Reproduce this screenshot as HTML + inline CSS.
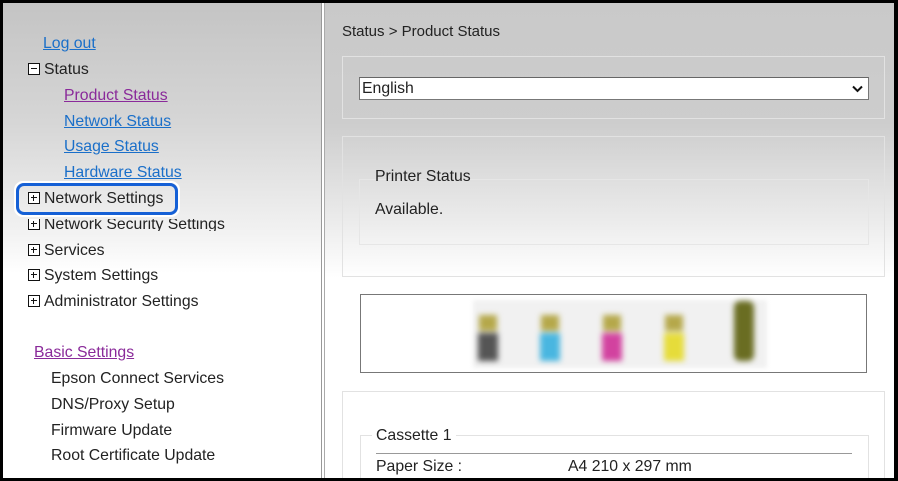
<!DOCTYPE html>
<html><head><meta charset="utf-8"><style>
*{margin:0;padding:0;box-sizing:border-box}
html,body{width:898px;height:481px;overflow:hidden;background:#000;font-family:"Liberation Sans",Arial,sans-serif;font-size:15.8px;color:#222}
#frame{position:absolute;left:3px;top:3px;width:891px;height:475px;background:#fff;overflow:hidden}
#left{position:absolute;left:0;top:0;width:318px;height:475px;background:linear-gradient(#c4c4c4 0,#d6d6d6 120px,#f2f2f2 230px,#fff 270px)}
#div{position:absolute;left:318px;top:0;width:4px;height:475px;border-left:1px solid #999;border-right:1px solid #aaa;background:#fff}
#right{position:absolute;left:322px;top:0;width:569px;height:475px;background:linear-gradient(#c9c9c9 0,#cdcdcd 120px,#ececec 220px,#fff 275px)}
.t{position:absolute;white-space:nowrap;line-height:18px}
a{color:#1a6fc9;text-decoration:underline}
a.v{color:#8a2a9a}
.bx{display:inline-block;width:12px;height:12px;border:1.5px solid #111;position:relative;vertical-align:-1px;margin-right:4px;background:#fff}
.bx:before{content:"";position:absolute;left:1.5px;top:3.75px;width:6px;height:1.5px;background:#111}
.bx.p:after{content:"";position:absolute;left:3.75px;top:1.5px;width:1.5px;height:6px;background:#111}
.box{position:absolute;border:1px solid #e2e2e2}
</style></head><body><div id="frame">
<div id="left">
<div class="t" style="left:40px;top:32px"><a>Log out</a></div>
<div class="t" style="left:25px;top:58px"><span class="bx"></span>Status</div>
<div class="t" style="left:61px;top:84px"><a class="v">Product Status</a></div>
<div class="t" style="left:61px;top:110px"><a>Network Status</a></div>
<div class="t" style="left:61px;top:135px"><a>Usage Status</a></div>
<div class="t" style="left:61px;top:161px"><a>Hardware Status</a></div>
<div style="position:absolute;left:25px;top:216px;width:260px;height:12px;overflow:hidden"><div class="t" style="left:0;top:-3px"><span class="bx p"></span>Network Security Settings</div></div>
<div style="position:absolute;left:11px;top:178px;width:166px;height:36px;border:2px solid #fff;border-radius:9px"></div>
<div style="position:absolute;left:13px;top:180px;width:162px;height:32px;border:3px solid #1560d6;border-radius:8px"></div>
<div class="t" style="left:25px;top:187px"><span class="bx p"></span>Network Settings</div>
<div class="t" style="left:25px;top:239px"><span class="bx p"></span>Services</div>
<div class="t" style="left:25px;top:264px"><span class="bx p"></span>System Settings</div>
<div class="t" style="left:25px;top:290px"><span class="bx p"></span>Administrator Settings</div>
<div class="t" style="left:31px;top:341px"><a class="v">Basic Settings</a></div>
<div class="t" style="left:48px;top:367px">Epson Connect Services</div>
<div class="t" style="left:48px;top:393px">DNS/Proxy Setup</div>
<div class="t" style="left:48px;top:419px">Firmware Update</div>
<div class="t" style="left:48px;top:444px">Root Certificate Update</div>
</div>
<div id="div"></div>
<div id="right">
<div class="t" style="left:17px;top:20px;font-size:15px">Status &gt; Product Status</div>
<div class="box" style="left:17px;top:53px;width:543px;height:63px"></div>
<div style="position:absolute;left:34px;top:74px;width:510px;height:23px;background:#fff;border:1px solid #777;border-top-color:#666"><span class="t" style="left:2px;top:2px">English</span>
<svg style="position:absolute;right:5px;top:7px" width="11" height="8" viewBox="0 0 11 8"><path d="M1 1.5L5.5 6L10 1.5" stroke="#111" stroke-width="2" fill="none"/></svg></div>
<div class="box" style="left:17px;top:133px;width:543px;height:141px"></div>
<div class="box" style="left:34px;top:176px;width:510px;height:66px;border-color:#e6e6e6"></div>
<div class="t" style="left:45px;top:165px;padding:0 4px 0 5px">Printer Status</div>
<div class="t" style="left:50px;top:198px">Available.</div>
<div style="position:absolute;left:35px;top:291px;width:507px;height:79px;border:1px solid #777;background:#fff"></div>
<div style="position:absolute;left:148px;top:297px;width:294px;height:68px;background:#f1f1f1;filter:blur(2px)"></div>
<div style="position:absolute;left:148px;top:304px;width:294px;height:62px;filter:blur(3px)">
<div style="position:absolute;left:6px;top:8px;width:18px;height:16px;background:#b5a84a"></div><div style="position:absolute;left:5px;top:26px;width:20px;height:28px;background:#555"></div>
<div style="position:absolute;left:68px;top:8px;width:18px;height:16px;background:#b5a84a"></div><div style="position:absolute;left:67px;top:26px;width:20px;height:28px;background:#49b6e0"></div>
<div style="position:absolute;left:130px;top:8px;width:18px;height:16px;background:#b5a84a"></div><div style="position:absolute;left:129px;top:26px;width:20px;height:28px;background:#d2429f"></div>
<div style="position:absolute;left:192px;top:8px;width:18px;height:16px;background:#b5a84a"></div><div style="position:absolute;left:191px;top:26px;width:20px;height:28px;background:#e6dc3a"></div>
<div style="position:absolute;left:261px;top:-6px;width:20px;height:60px;background:#6a6d22;border-radius:6px"></div>
</div>
<div class="box" style="left:17px;top:388px;width:543px;height:100px"></div>
<div class="box" style="left:35px;top:432px;width:509px;height:60px"></div>
<div style="position:absolute;left:51px;top:450px;width:476px;height:1px;background:#999"></div>
<div class="t" style="left:47px;top:424px;padding:0 4px;background:#fff">Cassette 1</div>
<div class="t" style="left:51px;top:455px">Paper Size :</div>
<div class="t" style="left:243px;top:455px">A4 210 x 297 mm</div>
</div>
</div></body></html>
